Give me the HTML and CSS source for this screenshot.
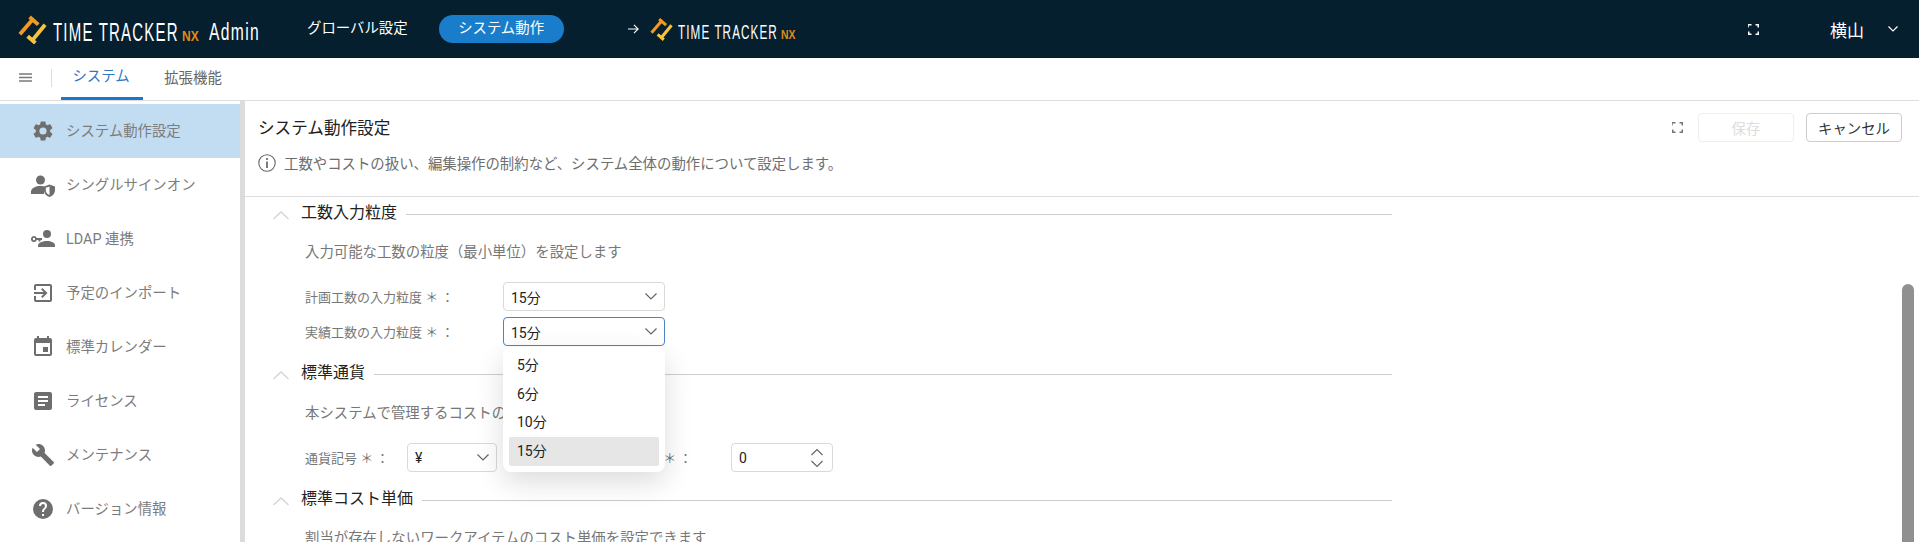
FILE: index.html
```html
<!DOCTYPE html>
<html lang="ja">
<head>
<meta charset="utf-8">
<title>TimeTracker NX Admin</title>
<link rel="stylesheet" href="styles.css">
</head>
<body>
<header class="topbar">
  <div class="brand">
    <svg class="logo-mark" viewBox="0 0 30 30"><g fill="none" stroke-width="4"><path stroke="#f09a22" d="M2 20 14 6M12 2l9 8"/><path stroke="#f5c33c" d="M28 10 15 26M10 22l8 7"/></g></svg>
    <span class="wordmark"><span class="wm-text">TIME TRACKER</span><span class="wm-nx">NX</span></span>
    <span class="admin"><span class="admin-text">Admin</span></span>
  </div>
  <nav class="topnav">
    <a class="topnav-item">グローバル設定</a>
    <a class="topnav-item is-on">システム動作</a>
  </nav>
  <div class="jump">
    <svg class="jump-arrow" viewBox="0 0 14 12"><path d="M1 6h11M7.500 1.500 12 6l-4.500 4.500" fill="none" stroke="#fff" stroke-width="1.200"/></svg>
    <svg class="logo-mark small" viewBox="0 0 30 30"><g fill="none" stroke-width="4"><path stroke="#f09a22" d="M2 20 14 6M12 2l9 8"/><path stroke="#f5c33c" d="M28 10 15 26M10 22l8 7"/></g></svg>
    <span class="wordmark small"><span class="wm-text">TIME TRACKER</span><span class="wm-nx">NX</span></span>
  </div>
  <div class="top-right">
    <svg class="expand" viewBox="0 0 11 11"><path d="M0 3.500V.75H3.500M7.500.75H10.250V3.500M10.250 7.500V10.250H7.500M3.500 10.250H.75V7.500" fill="none" stroke="#fff" stroke-width="1.500"/></svg>
    <span class="user">横山</span>
    <svg class="user-caret" viewBox="0 0 10 6"><path d="M.5.500 5 5 9.500.5" fill="none" stroke="#fff" stroke-width="1.200"/></svg>
  </div>
</header>

<div class="tabbar">
  <svg class="burger" viewBox="0 0 13 9"><path d="M0 1h13M0 4.500h13M0 8h13" stroke="#7a7a7a" stroke-width="1.500"/></svg>
  <span class="tab-sep"></span>
  <a class="tab is-on">システム</a>
  <a class="tab">拡張機能</a>
</div>

<div class="main">
  <aside class="sidebar">
    <a class="side-item is-on">
      <svg class="side-icon" viewBox="0 0 24 24"><path d="M19.140 12.940a7 7 0 0 0 0-1.880l2.030-1.580a.5.500 0 0 0 .12-.61l-1.920-3.320a.5.500 0 0 0-.59-.22l-2.390.96a7 7 0 0 0-1.620-.94l-.36-2.540a.5.500 0 0 0-.48-.41h-3.840a.5.500 0 0 0-.47.41l-.36 2.540a7.300 7.300 0 0 0-1.620.94l-2.390-.96a.5.500 0 0 0-.59.22L2.740 8.870a.5.500 0 0 0 .12.610l2.030 1.580a7 7 0 0 0 0 1.880l-2.030 1.580a.5.500 0 0 0-.12.610l1.920 3.320c.12.220.37.290.59.220l2.390-.96c.5.380 1.030.7 1.620.94l.36 2.540c.05.240.24.410.48.410h3.840c.24 0 .44-.17.47-.41l.36-2.540a7 7 0 0 0 1.620-.94l2.390.96c.22.080.47 0 .59-.22l1.920-3.320a.5.500 0 0 0-.12-.61zM12 15.600a3.600 3.600 0 1 1 0-7.200 3.600 3.600 0 0 1 0 7.200z"/></svg>
      <span>システム動作設定</span>
    </a>
    <a class="side-item">
      <svg class="side-icon" viewBox="0 0 24 24"><circle cx="9.500" cy="7" r="4.500"/><path d="M0 21v-2.500C0 15 5 13 9.500 13c1.200 0 2.400.14 3.500.4V21z"/><path fill-rule="evenodd" d="M18.500 11.500 24 13.500v3.600c0 3.300-2.300 6.200-5.500 6.900-3.200-.7-5.500-3.600-5.500-6.900v-3.600zm0 2-3.700 1.300v2.300c0 2.300 1.500 4.400 3.700 5z"/></svg>
      <span>シングルサインオン</span>
    </a>
    <a class="side-item">
      <svg class="side-icon" viewBox="0 0 24 24"><circle cx="16" cy="7" r="4"/><path d="M7 20v-1.500C7 15.500 12 14 16 14s8 1.500 8 4.500V20z"/><path fill-rule="evenodd" d="M3 9a3 3 0 0 1 2.800 2H11v2H9.500v1.500H7.500V13H5.800A3 3 0 1 1 3 9zm0 1.800a1.200 1.200 0 1 0 0 2.400 1.200 1.200 0 0 0 0-2.400z"/></svg>
      <span>LDAP 連携</span>
    </a>
    <a class="side-item">
      <svg class="side-icon" viewBox="0 0 24 24"><path d="M10.090 15.590 11.500 17l5-5-5-5-1.410 1.410L12.670 11H3v2h9.670zM19 3H5a2 2 0 0 0-2 2v4h2V5h14v14H5v-4H3v4a2 2 0 0 0 2 2h14a2 2 0 0 0 2-2V5a2 2 0 0 0-2-2z"/></svg>
      <span>予定のインポート</span>
    </a>
    <a class="side-item">
      <svg class="side-icon" viewBox="0 0 24 24"><path d="M17 12h-5v5h5zM16 1v2H8V1H6v2H5a2 2 0 0 0-2 2v14a2 2 0 0 0 2 2h14a2 2 0 0 0 2-2V5a2 2 0 0 0-2-2h-1V1zm3 18H5V8h14z"/></svg>
      <span>標準カレンダー</span>
    </a>
    <a class="side-item">
      <svg class="side-icon" viewBox="0 0 24 24"><path d="M19 3H5a2 2 0 0 0-2 2v14a2 2 0 0 0 2 2h14a2 2 0 0 0 2-2V5a2 2 0 0 0-2-2zm-5 14H7v-2h7zm3-4H7v-2h10zm0-4H7V7h10z"/></svg>
      <span>ライセンス</span>
    </a>
    <a class="side-item">
      <svg class="side-icon" viewBox="0 0 24 24"><path d="M22.700 19 13.600 9.900c.9-2.300.4-5-1.500-6.900-2-2-5-2.400-7.400-1.300L9 6 6 9 1.600 4.700C.4 7.100.9 10.100 2.900 12.100c1.900 1.900 4.600 2.400 6.900 1.500l9.100 9.100c.4.400 1 .4 1.400 0l2.300-2.300c.5-.4.500-1.100.100-1.400z"/></svg>
      <span>メンテナンス</span>
    </a>
    <a class="side-item">
      <svg class="side-icon" viewBox="0 0 24 24"><path d="M12 2a10 10 0 1 0 0 20 10 10 0 0 0 0-20zm1 17h-2v-2h2zm2.070-7.750-.9.920C13.450 12.900 13 13.500 13 15h-2v-.5c0-1.100.45-2.100 1.170-2.830l1.240-1.260c.37-.36.59-.86.590-1.410a2 2 0 0 0-4 0H8a4 4 0 0 1 8 0c0 .88-.36 1.680-.93 2.250z"/></svg>
      <span>バージョン情報</span>
    </a>
  </aside>
  <div class="divider"></div>
  <section class="content">
    <div class="page-head">
      <div class="page-title-row">
        <h1 class="page-title">システム動作設定</h1>
        <div class="page-actions">
          <svg class="expand dark" viewBox="0 0 11 11"><path d="M0 3.500V.75H3.500M7.500.75H10.250V3.500M10.250 7.500V10.250H7.500M3.500 10.250H.75V7.500" fill="none" stroke="#777" stroke-width="1.500"/></svg>
          <button class="btn is-disabled">保存</button>
          <button class="btn">キャンセル</button>
        </div>
      </div>
      <div class="page-desc">
        <svg class="info" viewBox="0 0 18 18"><circle cx="9" cy="9" r="8.200" fill="none" stroke="#666" stroke-width="1.100"/><circle cx="9" cy="5" r="1.100" fill="#666"/><path d="M9 7.500v6.500" stroke="#666" stroke-width="1.700"/></svg>
        <span>工数やコストの扱い、編集操作の制約など、システム全体の動作について設定します。</span>
      </div>
    </div>

    <div class="form-area">
      <div class="form-sec first">
        <div class="sec-head">
          <svg class="sec-chev" viewBox="0 0 16 9"><path d="M.5 8 8 1l7.500 7" fill="none" stroke="#d4d4d4" stroke-width="1.300"/></svg>
          <h2 class="sec-title">工数入力粒度</h2><span class="sec-line"></span>
        </div>
        <p class="sec-desc">入力可能な工数の粒度（最小単位）を設定します</p>
        <div class="field-row">
          <label class="field-label wide">計画工数の入力粒度 ＊&thinsp;：</label>
          <div class="select w161"><span>15分</span><svg class="chev" viewBox="0 0 12 7"><path d="M.5.500 6 6 11.500.5" fill="none" stroke="#666" stroke-width="1.200"/></svg></div>
        </div>
        <div class="field-row tight">
          <label class="field-label wide">実績工数の入力粒度 ＊&thinsp;：</label>
          <div class="select w161 is-focus"><span>15分</span><svg class="chev" viewBox="0 0 12 7"><path d="M.5.500 6 6 11.500.5" fill="none" stroke="#666" stroke-width="1.200"/></svg>
            <ul class="menu">
              <li>5分</li>
              <li>6分</li>
              <li>10分</li>
              <li class="is-sel">15分</li>
            </ul>
          </div>
        </div>
      </div>

      <div class="form-sec second">
        <div class="sec-head">
          <svg class="sec-chev" viewBox="0 0 16 9"><path d="M.5 8 8 1l7.500 7" fill="none" stroke="#d4d4d4" stroke-width="1.300"/></svg>
          <h2 class="sec-title">標準通貨</h2><span class="sec-line"></span>
        </div>
        <p class="sec-desc">本システムで管理するコストの通貨を設定します</p>
        <div class="field-row cur">
          <label class="field-label short">通貨記号 ＊&thinsp;：</label>
          <div class="select w90"><span>¥</span><svg class="chev" viewBox="0 0 12 7"><path d="M.5.500 6 6 11.500.5" fill="none" stroke="#666" stroke-width="1.200"/></svg></div>
          <label class="field-label digits">小数桁数 ＊&thinsp;：</label>
          <div class="select w102"><span>0</span>
            <svg class="spin" viewBox="0 0 14 20"><path d="M1.500 7 7 1.500 12.500 7M1.500 13 7 18.500 12.500 13" fill="none" stroke="#666" stroke-width="1.200"/></svg>
          </div>
        </div>
      </div>

      <div class="form-sec third">
        <div class="sec-head">
          <svg class="sec-chev" viewBox="0 0 16 9"><path d="M.5 8 8 1l7.500 7" fill="none" stroke="#d4d4d4" stroke-width="1.300"/></svg>
          <h2 class="sec-title">標準コスト単価</h2><span class="sec-line"></span>
        </div>
        <p class="sec-desc">割当が存在しないワークアイテムのコスト単価を設定できます</p>
      </div>
    </div>
    <div class="scroll-thumb"></div>
  </section>
</div>
</body>
</html>
```

FILE: styles.css
```css
* { box-sizing: border-box; }
html, body { height: 100%; }
body {
  margin: 0;
  height: 542px;
  overflow: hidden;
  display: flex;
  flex-direction: column;
  background: #fff;
  color: #222;
  font-family: Roboto, "Noto Sans CJK JP", sans-serif;
  font-size: 14px;
}

/* top bar */
.topbar {
  flex: 0 0 58px;
  display: flex;
  align-items: center;
  background: #051f2f;
  color: #fff;
  padding-left: 18px;
  padding-right: 21px;
}
.brand { display: flex; align-items: center; width: 289px; }
.logo-mark { width: 29px; height: 29px; flex: none; margin-right: 6px; }
.logo-mark.small { width: 23px; height: 24px; margin-right: 5px; }
.wordmark {
  display: flex;
  align-items: baseline;
  width: 156px;
  font-family: "Liberation Sans", sans-serif;
  margin-top: 6px;
}
.wm-text {
  display: inline-block;
  width: 129px;
  font-size: 25px;
  line-height: 26px;
  letter-spacing: 2px;
  white-space: nowrap;
  transform: scaleX(.6);
  transform-origin: left center;
}
.wm-nx {
  display: inline-block;
  width: 22px;
  font-size: 15px;
  font-weight: 700;
  color: #e08a1c;
  white-space: nowrap;
  transform: scaleX(.8);
  transform-origin: left center;
}
.admin { width: 52px; margin-top: 6px; font-family: "Liberation Sans", sans-serif; }
.admin-text {
  display: inline-block;
  font-size: 23px;
  line-height: 26px;
  letter-spacing: 2px;
  white-space: nowrap;
  transform: scaleX(.68);
  transform-origin: left center;
}
.wordmark.small { width: 122px; margin-top: 6px; }
.small .wm-text { width: 103px; font-size: 19.500px; line-height: 20px; letter-spacing: 1.800px; transform: scaleX(.6); }
.small .wm-nx { width: 17px; font-size: 13px; transform: scaleX(.8); }

.topnav { display: flex; align-items: center; margin-right: 63px; }
.topnav-item { font-size: 14.400px; line-height: 28px; color: #fff; margin-right: 31px; }
.topnav-item.is-on {
  width: 125px;
  height: 28px;
  margin-right: 0;
  border-radius: 14px;
  background: #1a7dcb;
  text-align: center;
}
.jump { display: flex; align-items: center; }
.jump-arrow { width: 13px; height: 12px; margin-right: 10px; }
.top-right { display: flex; align-items: center; margin-left: auto; }
.expand { width: 11px; height: 11px; flex: none; }
.user { font-size: 17px; margin-left: 71px; }
.user-caret { width: 10px; height: 6px; margin-left: 24px; }

/* tabs */
.tabbar {
  flex: 0 0 43px;
  display: flex;
  align-items: stretch;
  border-bottom: 1px solid #ddd;
  padding-left: 19px;
}
.burger { width: 13px; height: 9px; align-self: center; margin-top: -3px; }
.tab-sep { width: 1px; height: 18px; background: #ddd; align-self: center; margin: -3px 9px 0 19px; }
.tab {
  width: 82px;
  line-height: 43px;
  margin-top: -1px;
  text-align: center;
  color: #666;
  font-size: 14.400px;
  margin-right: 10px;
}
.tab + .tab { width: 80px; }
.tab.is-on {
  color: #2f78c4;
  border-bottom: 3px solid #1976d2;
  margin-bottom: -1px;
  height: 43px;
  line-height: 40px;
  padding-right: 2px;
}

/* main */
.main { flex: 1; min-height: 0; display: flex; }
.sidebar { flex: 0 0 240px; padding-top: 3px; }
.side-item {
  display: flex;
  align-items: center;
  height: 54px;
  padding-left: 31px;
  color: #7c7c7c;
  font-size: 14.400px;
}
.side-item span { padding-bottom: 3px; }
.side-item.is-on { background: #c2dcf2; }
.side-icon { width: 24px; height: 24px; fill: #6e6e6e; flex: none; margin-right: 11px; }
.divider { flex: 0 0 5px; background: #dcdcdc; }

.content { flex: 1; min-width: 0; position: relative; overflow: hidden; }
.page-head { height: 96px; border-bottom: 1px solid #ddd; padding: 12px 17px 0 13px; }
.page-title-row { display: flex; align-items: center; justify-content: space-between; height: 29px; }
.page-title { margin: 0; padding-bottom: 2px; font-size: 16.600px; font-weight: 400; color: #222; }
.page-actions { display: flex; align-items: center; }
.page-actions .expand { margin-right: 15px; }
.btn {
  width: 96px;
  height: 29px;
  margin-left: 12px;
  padding: 0;
  background: #fff;
  border: 1px solid #ccc;
  border-radius: 4px;
  font: inherit;
  font-size: 14.400px;
  color: #333;
}
.page-actions .expand + .btn { margin-left: 0; }
.btn.is-disabled { border-color: #eee; color: #ddd; }
.page-desc { display: flex; align-items: center; margin-top: 10px; color: #6e6e6e; font-size: 14.400px; }
.info { width: 18px; height: 18px; margin-right: 8px; flex: none; }

.form-area { width: 1147px; padding-left: 28px; }
.sec-head { display: flex; align-items: center; height: 24px; }
.sec-chev { width: 16px; height: 9px; flex: none; margin-right: 12px; margin-top: 2px; }
.sec-title { margin: 0 0 7px; font-size: 16px; font-weight: 400; color: #222; white-space: nowrap; }
.sec-line { flex: 1; height: 1px; background: #ccc; margin-left: 9px; }
.sec-desc { margin: 0; padding-left: 32px; font-size: 14.400px; color: #777; line-height: 20px; }
.form-sec.first { padding-top: 5px; }
.form-sec.first .sec-desc { margin-top: 17px; }
.form-sec.second { margin-top: 16px; }
.form-sec.second .sec-desc { margin-top: 18px; }
.form-sec.third { margin-top: 16px; }
.form-sec.third .sec-desc { margin-top: 17px; }
.field-row { display: flex; align-items: center; padding-left: 32px; margin-top: 19px; }
.field-row.tight { margin-top: 6px; }
.field-row.cur { margin-top: 19px; }
.field-label { font-size: 13px; color: #777; white-space: nowrap; }
.field-label.wide { width: 198px; }
.field-label.short { width: 102px; }
.field-label.digits { width: 234px; text-align: right; padding-right: 39px; }

.select {
  position: relative;
  height: 29px;
  display: flex;
  align-items: center;
  justify-content: space-between;
  padding: 0 8px 0 7px;
  background: #fff;
  border: 1px solid #d9d9d9;
  border-radius: 4px;
  font-size: 14px;
  color: #222;
}
.w161 { width: 162px; }
.w90 { width: 90px; }
.w102 { width: 102px; }
.select.is-focus { border-color: #4a86c5; }
.chev { width: 12px; height: 7px; flex: none; margin-right: -1px; }
.spin { width: 14px; height: 20px; flex: none; margin-right: 0; }

.menu {
  position: absolute;
  top: 29px;
  left: -1px;
  width: 162px;
  margin: 0;
  padding: 4px 6px 6px;
  list-style: none;
  background: #fff;
  border-radius: 8px;
  box-shadow: 0 10px 28px rgba(0,0,0,.14);
  z-index: 5;
}
.menu li { height: 29px; line-height: 29px; padding-left: 8px; border-radius: 2px; font-size: 14px; }
.menu li:nth-child(1), .menu li:nth-child(2) { height: 28.500px; }
.menu li.is-sel { background: #e6e6e6; }

.scroll-thumb {
  position: absolute;
  top: 183px;
  right: 5px;
  bottom: 0;
  width: 12px;
  background: #909090;
  border-radius: 6px 6px 0 0;
}
```
